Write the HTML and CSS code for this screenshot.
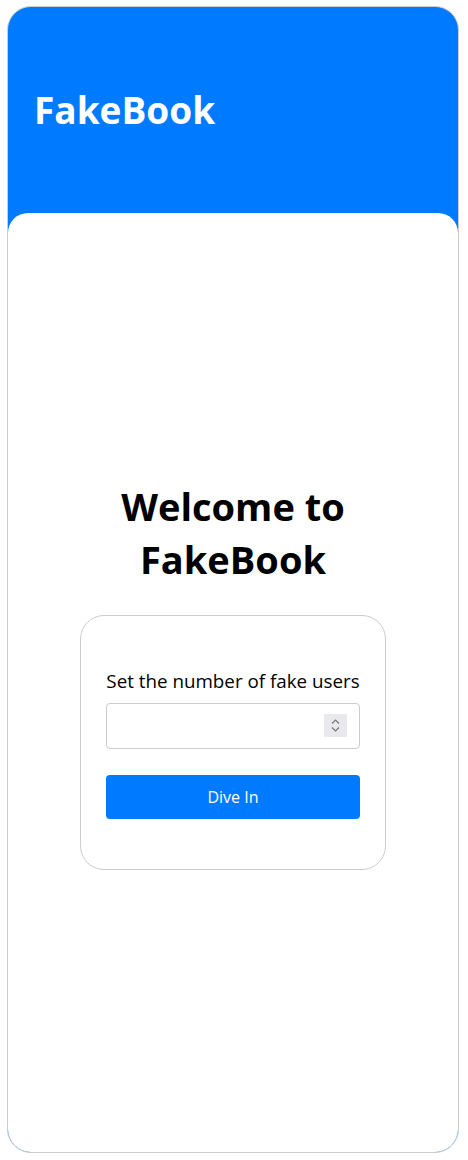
FILE: index.html
```html
<!DOCTYPE html>
<html lang="en">
<head>
<meta charset="utf-8">
<title>FakeBook</title>
<link rel="stylesheet" href="styles.css">
</head>
<body>
<div class="app">
  <header class="topbar">
    <h1 class="brand">FakeBook</h1>
  </header>
  <main class="content">
    <h2 class="welcome">Welcome to<br>FakeBook</h2>
    <form class="card">
      <label class="label" for="users">Set the number of fake users</label>
      <div class="field">
        <input class="number" id="users" type="number">
        <span class="spin" aria-hidden="true">
          <svg width="23" height="23" viewBox="0 0 23 23">
            <path d="M8 9.5 L11.5 6 L15 9.5" fill="none" stroke="#777" stroke-width="1.2"/>
            <path d="M8 13.5 L11.5 17 L15 13.5" fill="none" stroke="#777" stroke-width="1.2"/>
          </svg>
        </span>
      </div>
      <button class="btn" type="button">Dive In</button>
    </form>
  </main>
</div>
</body>
</html>
```

FILE: styles.css
```css
* { box-sizing: border-box; }
html, body { margin: 0; padding: 0; background: #fff; }
body { font-family: "Open Sans", "Noto Sans", sans-serif; color: #000; }

.app {
  margin: 6px 9px 0 7px;
  height: 1147px;
  border: 1px solid #ccc;
  border-radius: 24px;
  background: #007bff;
  overflow: hidden;
  display: flex;
  flex-direction: column;
}

.topbar {
  height: 206px;
  flex: none;
  display: flex;
  align-items: center;
  padding-left: 26px;
}

.brand {
  margin: 0;
  color: #fff;
  font-size: 37px;
  font-weight: 700;
  line-height: 1.2;
}

.content {
  flex: 1;
  background: #fff;
  border-radius: 20px;
  display: flex;
  flex-direction: column;
  align-items: center;
  justify-content: center;
  padding-bottom: 16px;
}

.welcome {
  margin: 0 0 29px;
  font-size: 38px;
  line-height: 53px;
  font-weight: 700;
  text-align: center;
}

.card {
  width: 306px;
  border: 1px solid #ccc;
  border-radius: 24px;
  padding: 52px 25px 50px;
  display: flex;
  flex-direction: column;
}

.label {
  font-size: 18.8px;
  line-height: 27px;
  text-align: center;
  margin-bottom: 8px;
  white-space: nowrap;
}

.field {
  position: relative;
  margin-bottom: 26px;
}

.number {
  display: block;
  width: 100%;
  height: 46px;
  border: 1px solid #ccc;
  border-radius: 4px;
  padding: 0 12px;
  font-size: 16px;
  font-family: inherit;
  -moz-appearance: textfield;
  appearance: textfield;
}

.number::-webkit-inner-spin-button,
.number::-webkit-outer-spin-button {
  -webkit-appearance: none;
  margin: 0;
}

.spin {
  position: absolute;
  right: 13px;
  top: 11px;
  width: 23px;
  height: 23px;
  background: #e9e9ed;
  display: block;
  pointer-events: none;
}

.spin svg { display: block; }

.btn {
  height: 44px;
  border: none;
  border-radius: 4px;
  background: #007bff;
  color: #fff;
  font-family: inherit;
  font-size: 16px;
}
```
